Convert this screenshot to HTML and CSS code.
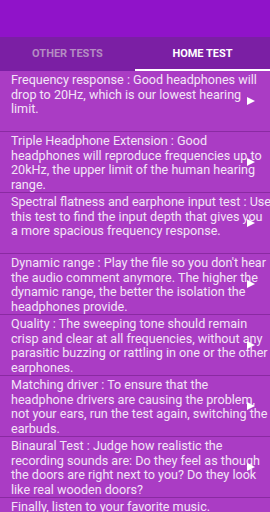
FILE: index.html
```html
<!DOCTYPE html>
<html>
<head>
<meta charset="utf-8">
<link rel="stylesheet" href="styles.css">
</head>
<body>
<div class="app">
  <div class="topbar"></div>
  <div class="tabs">
    <div class="tab">OTHER TESTS</div>
    <div class="tab active">HOME TEST</div>
  </div>
  <div class="list">
    <div class="item"><p>Frequency response : Good headphones will<br>drop to 20Hz, which is our lowest hearing<br>limit.</p><span class="play"></span></div>
    <div class="item"><p>Triple Headphone Extension : Good<br>headphones will reproduce frequencies up to<br>20kHz, the upper limit of the human hearing<br>range.</p><span class="play"></span></div>
    <div class="item"><p>Spectral flatness and earphone input test : Use<br>this test to find the input depth that gives you<br>a more spacious frequency response.</p><span class="play"></span></div>
    <div class="item"><p>Dynamic range : Play the file so you don't hear<br>the audio comment anymore. The higher the<br>dynamic range, the better the isolation the<br>headphones provide.</p><span class="play"></span></div>
    <div class="item"><p>Quality : The sweeping tone should remain<br>crisp and clear at all frequencies, without any<br>parasitic buzzing or rattling in one or the other<br>earphones.</p><span class="play"></span></div>
    <div class="item"><p>Matching driver : To ensure that the<br>headphone drivers are causing the problem,<br>not your ears, run the test again, switching the<br>earbuds.</p><span class="play"></span></div>
    <div class="item"><p>Binaural Test : Judge how realistic the<br>recording sounds are: Do they feel as though<br>the doors are right next to you? Do they look<br>like real wooden doors?</p><span class="play"></span></div>
    <div class="item"><p>Finally, listen to your favorite music.</p><span class="play"></span></div>
  </div>
</div>
</body>
</html>
```
FILE: styles.css
```css
* { box-sizing: border-box; }
html, body { margin: 0; padding: 0; }
body {
  width: 270px;
  height: 512px;
  overflow: hidden;
  background: #aa3cc4;
  font-family: Roboto, "Noto Sans", sans-serif;
}
.topbar {
  height: 37px;
  background: #9013c9;
}
.tabs {
  display: flex;
  height: 34px;
  background: #7b1fa4;
}
.tab {
  flex: 1;
  display: flex;
  align-items: center;
  justify-content: center;
  font-size: 11px;
  font-weight: 700;
  color: #b48cc2;
  border-bottom: 2px solid transparent;
}
.tab.active {
  color: #ffffff;
  border-bottom-color: #ffffff;
}
.list {
  background: #aa3cc4;
}
.item {
  position: relative;
  height: 61px;
  border-bottom: 1px solid #8a2aa2;
  padding: 2px 0 0 11px;
  overflow: hidden;
}
.item p {
  margin: 0;
  font-size: 12.6px;
  line-height: 14.5px;
  color: #f3e4f7;
  white-space: nowrap;
}
.play {
  position: absolute;
  right: 15px;
  top: 50%;
  margin-top: -4px;
  width: 0;
  height: 0;
  border-top: 4px solid transparent;
  border-bottom: 4px solid transparent;
  border-left: 8px solid #ffffff;
}
```
